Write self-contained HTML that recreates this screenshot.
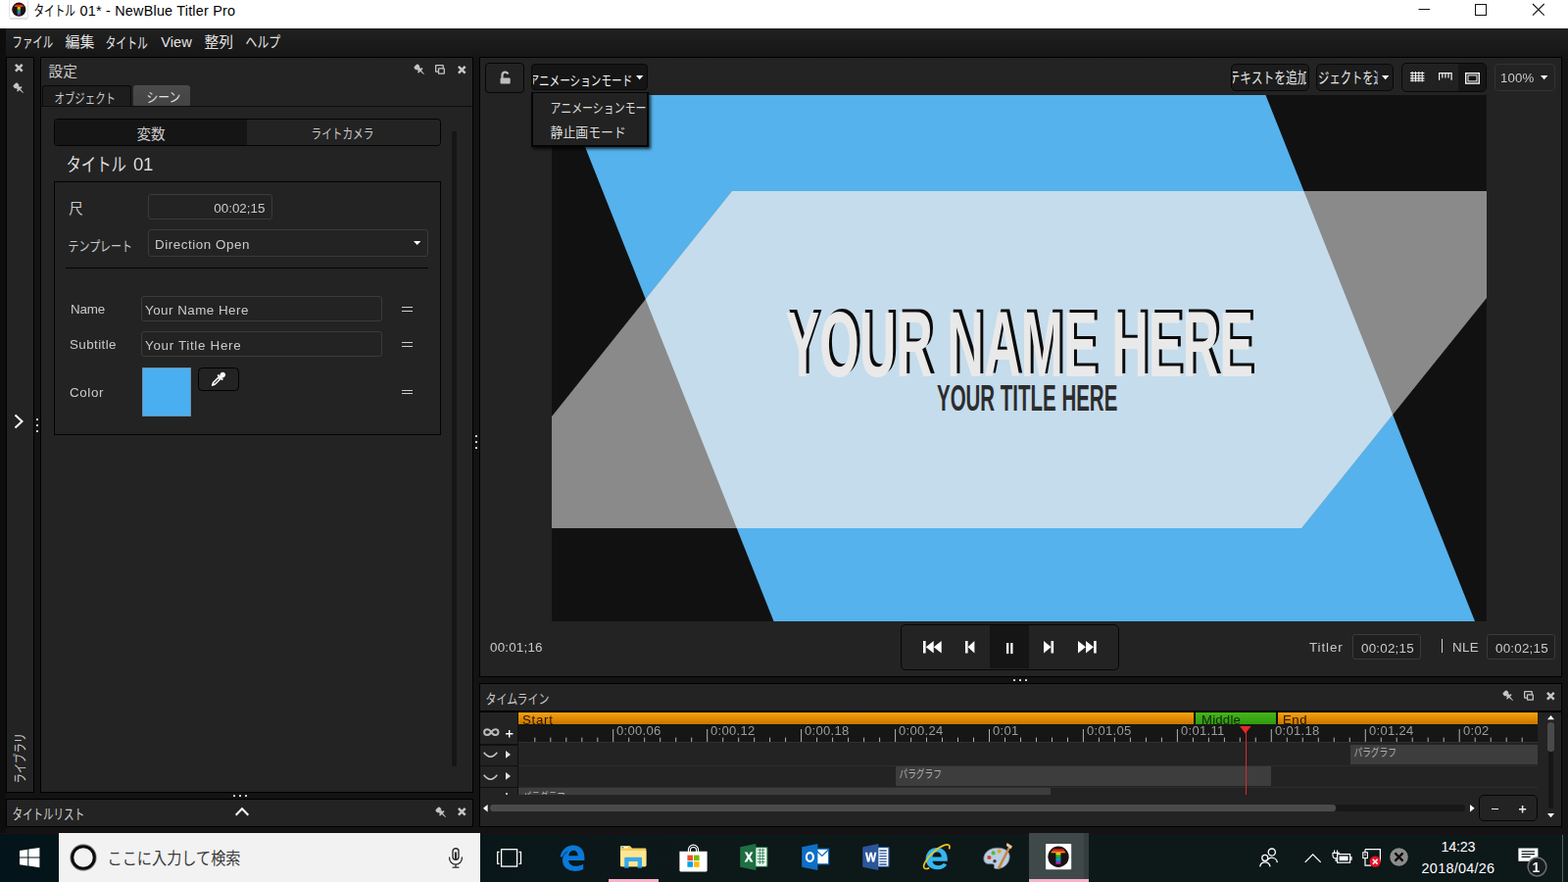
<!DOCTYPE html>
<html lang="ja">
<head>
<meta charset="utf-8">
<title>タイトル 01* - NewBlue Titler Pro</title>
<style>
html,body{margin:0;padding:0;}
body{width:1600px;height:900px;overflow:hidden;background:#131313;position:relative;font-family:"Liberation Sans",sans-serif;}
div{position:absolute;}
svg{display:block;overflow:visible;}
.t{white-space:pre;}
.g{white-space:pre;will-change:transform;}
svg text{font-family:"Liberation Sans","Noto Sans CJK JP",sans-serif;}
</style>
</head>
<body>
<!-- window frame, title bar, menu bar, side strips -->
<div style="left:0px;top:0px;width:1600px;height:29px;background:#fff;"></div>
<svg style="position:absolute;left:9px;top:0px;" width="20" height="20" viewBox="0 0 20 20"><defs><linearGradient id="rb" x1="0" y1="0" x2="0" y2="1"><stop offset="0" stop-color="#e8261c"/><stop offset="0.16" stop-color="#ec3a1a"/><stop offset="0.24" stop-color="#eea00c"/><stop offset="0.36" stop-color="#e2c410"/><stop offset="0.5" stop-color="#42a82c"/><stop offset="0.62" stop-color="#14a04a"/><stop offset="0.74" stop-color="#0c98d8"/><stop offset="0.86" stop-color="#3a5cc8"/><stop offset="1" stop-color="#d81878"/></linearGradient></defs><rect x="0.600" y="-1" width="19" height="19.800" rx="1.600" fill="#fdfdfd" stroke="#e2e2e2" stroke-width="1"/><path d="M1.400 19.200h17.400" stroke="#d0d0d0" stroke-width="0.800"/><circle cx="10.300" cy="9.660" r="7.100" fill="#1a1212"/><path d="M7.100 4.800h6.400l1.700 2.300h-3.300v8.100h-3.200v-8.100h-3.300z" fill="url(#rb)"/></svg>
<svg style="position:absolute;left:34.00px;top:2.70px;" width="43.40" height="14.70" viewBox="0 0 43.40 14.70"><text x="0.5" y="13.04" font-size="14.6" fill="#000" textLength="42.4" lengthAdjust="spacingAndGlyphs">タイトル</text></svg>
<div class="t" style="left:81.6px;top:4.11px;font-size:14.4px;line-height:14.4px;color:#000;white-space:pre;letter-spacing:0.21px;">01* - NewBlue Titler Pro</div>
<svg style="position:absolute;left:1440px;top:0px;" width="160" height="29" viewBox="0 0 160 29"><path d="M7.5 9.5h11.5" stroke="#111" stroke-width="1"/><rect x="65.5" y="4.5" width="11" height="11" fill="none" stroke="#111" stroke-width="1"/><path d="M124 4L135.700 15.700M135.700 4L124 15.700" stroke="#111" stroke-width="1.100" fill="none"/></svg>
<div style="left:0px;top:29px;width:1600px;height:29.6px;background:linear-gradient(#212121,#1b1b1b 50%,#151515);"></div>
<div style="left:0px;top:29px;width:6px;height:821px;background:#0d0d0d;"></div>
<svg style="position:absolute;left:11.70px;top:34.70px;" width="42.60" height="15.70" viewBox="0 0 42.60 15.70"><text x="0.5" y="13.44" font-size="15.3" fill="#e4e4e4" textLength="41.6" lengthAdjust="spacingAndGlyphs">ファイル</text></svg>
<svg style="position:absolute;left:65.50px;top:34.20px;" width="30.80" height="15.90" viewBox="0 0 30.80 15.90"><text x="0.5" y="13.69" font-size="15" fill="#e4e4e4" textLength="29.8" lengthAdjust="spacingAndGlyphs">編集</text></svg>
<svg style="position:absolute;left:107.40px;top:34.70px;" width="44.50" height="15.70" viewBox="0 0 44.50 15.70"><text x="0.5" y="14.0" font-size="15.3" fill="#e4e4e4" textLength="43.5" lengthAdjust="spacingAndGlyphs">タイトル</text></svg>
<div class="t" style="left:164.2px;top:35.64px;font-size:14.6px;line-height:14.6px;color:#e4e4e4;white-space:pre;letter-spacing:0.1px;">View</div>
<svg style="position:absolute;left:207.70px;top:34.20px;" width="30.50" height="15.90" viewBox="0 0 30.50 15.90"><text x="0.5" y="13.65" font-size="15" fill="#e4e4e4" textLength="29.5" lengthAdjust="spacingAndGlyphs">整列</text></svg>
<svg style="position:absolute;left:250.30px;top:34.40px;" width="36.70" height="15.80" viewBox="0 0 36.70 15.80"><text x="0.5" y="14.25" font-size="15.3" fill="#e4e4e4" textLength="35.7" lengthAdjust="spacingAndGlyphs">ヘルプ</text></svg>
<div style="left:7px;top:58.6px;width:27.2px;height:749.4px;background:#232323;outline:1px solid #000;"></div>
<svg style="position:absolute;left:14.7px;top:64.8px;" width="8.6" height="8.6" viewBox="0 0 8.6 8.6"><path d="M0.9 0.9L7.7 7.7M7.7 0.9L0.9 7.7" stroke="#c6c6c6" stroke-width="2.5" fill="none"/></svg>
<svg style="position:absolute;left:14px;top:85.2px;" width="10" height="10" viewBox="0 0 10 10"><g transform="rotate(-45 5 5)" fill="#c6c6c6"><rect x="2.200" y="-0.700" width="5.600" height="4" rx="1.200"/><path d="M3.100 3.200h3.800l-0.300 2.400h-3.200z"/><rect x="1.800" y="5.300" width="6.400" height="1.600" rx="0.500"/><path d="M4.200 6.800h1.600L5.300 11.700h-0.600z"/></g></svg>
<svg style="position:absolute;left:14px;top:422px;" width="11" height="16" viewBox="0 0 11 16"><path d="M1.5 1.5L8.5 8L1.5 14.5" fill="none" stroke="#fff" stroke-width="2"/></svg>
<div style="left:36.9px;top:426.6px;width:2px;height:2px;background:#e4e4e4;border-radius:0.6px;"></div>
<div style="left:484.9px;top:444px;width:2px;height:2px;background:#e4e4e4;border-radius:0.6px;"></div>
<div style="left:36.9px;top:432.7px;width:2px;height:2px;background:#e4e4e4;border-radius:0.6px;"></div>
<div style="left:484.9px;top:450px;width:2px;height:2px;background:#e4e4e4;border-radius:0.6px;"></div>
<div style="left:36.9px;top:438.8px;width:2px;height:2px;background:#e4e4e4;border-radius:0.6px;"></div>
<div style="left:484.9px;top:456px;width:2px;height:2px;background:#e4e4e4;border-radius:0.6px;"></div>
<div style="left:12px;top:749.5px;width:15px;height:52px;"><svg style="position:absolute;left:-1.00px;top:-1.00px;transform-origin:0 0;transform:translate(0px,51px) rotate(-90deg);" width="52.60" height="15.80" viewBox="0 0 52.60 15.80"><text x="0.5" y="13.96" font-size="13.8" fill="#c8c8c8" textLength="51.6" lengthAdjust="spacingAndGlyphs">ライブラリ</text></svg></div>
<div style="left:237.5px;top:811px;width:2px;height:2px;background:#e4e4e4;border-radius:0.6px;"></div>
<div style="left:1034.4px;top:693px;width:2px;height:2px;background:#e4e4e4;border-radius:0.6px;"></div>
<div style="left:243.5px;top:811px;width:2px;height:2px;background:#e4e4e4;border-radius:0.6px;"></div>
<div style="left:1040.4px;top:693px;width:2px;height:2px;background:#e4e4e4;border-radius:0.6px;"></div>
<div style="left:249.5px;top:811px;width:2px;height:2px;background:#e4e4e4;border-radius:0.6px;"></div>
<div style="left:1046.4px;top:693px;width:2px;height:2px;background:#e4e4e4;border-radius:0.6px;"></div>
<div style="left:7px;top:816px;width:475px;height:27px;background:#232323;outline:1px solid #000;"></div>
<svg style="position:absolute;left:12.20px;top:821.50px;" width="74.70" height="15.50" viewBox="0 0 74.70 15.50"><text x="0.5" y="13.62" font-size="14.5" fill="#d0d0d0" textLength="73.7" lengthAdjust="spacingAndGlyphs">タイトルリスト</text></svg>
<svg style="position:absolute;left:239px;top:823px;" width="16" height="10" viewBox="0 0 16 10"><path d="M1.7 8.8L8 2.3L14.3 8.8" fill="none" stroke="#fff" stroke-width="2"/></svg>
<svg style="position:absolute;left:445px;top:823.5px;" width="10" height="10" viewBox="0 0 10 10"><g transform="rotate(-45 5 5)" fill="#c6c6c6"><rect x="2.200" y="-0.700" width="5.600" height="4" rx="1.200"/><path d="M3.100 3.200h3.800l-0.300 2.400h-3.200z"/><rect x="1.800" y="5.300" width="6.400" height="1.600" rx="0.500"/><path d="M4.200 6.800h1.600L5.300 11.700h-0.600z"/></g></svg>
<svg style="position:absolute;left:466.8px;top:823.8px;" width="8.6" height="8.6" viewBox="0 0 8.6 8.6"><path d="M0.9 0.9L7.7 7.7M7.7 0.9L0.9 7.7" stroke="#c6c6c6" stroke-width="2.5" fill="none"/></svg>
<!-- settings panel -->
<div style="left:41.6px;top:58.6px;width:440.4px;height:749.4px;background:#232323;outline:1px solid #000;"></div>
<svg style="position:absolute;left:48.80px;top:64.90px;" width="30.40" height="15.40" viewBox="0 0 30.40 15.40"><text x="0.5" y="13.25" font-size="14.5" fill="#cacaca" textLength="29.4" lengthAdjust="spacingAndGlyphs">設定</text></svg>
<svg style="position:absolute;left:423px;top:65.9px;" width="10" height="10" viewBox="0 0 10 10"><g transform="rotate(-45 5 5)" fill="#c6c6c6"><rect x="2.200" y="-0.700" width="5.600" height="4" rx="1.200"/><path d="M3.100 3.200h3.800l-0.300 2.400h-3.200z"/><rect x="1.800" y="5.300" width="6.400" height="1.600" rx="0.500"/><path d="M4.200 6.800h1.600L5.300 11.700h-0.600z"/></g></svg>
<svg style="position:absolute;left:444.05px;top:66.1px;" width="10" height="10" viewBox="0 0 10 10"><rect x="0.65" y="0.65" width="7.6" height="6.4" rx="0.4" fill="none" stroke="#c6c6c6" stroke-width="1.3"/><rect x="3.5" y="3.85" width="5.8" height="5.2" rx="0.4" fill="#232323" stroke="#c6c6c6" stroke-width="1.3"/></svg>
<svg style="position:absolute;left:466.7px;top:66.8px;" width="8.6" height="8.6" viewBox="0 0 8.6 8.6"><path d="M0.9 0.9L7.7 7.7M7.7 0.9L0.9 7.7" stroke="#c6c6c6" stroke-width="2.5" fill="none"/></svg>
<div style="left:43px;top:87.4px;width:90.6px;height:20.6px;background:#1d1d1d;border:1.2px solid #080808;border-bottom:none;border-radius:3px 3px 0 0;box-sizing:border-box;"></div>
<svg style="position:absolute;left:54.70px;top:90.70px;" width="63.50" height="15.60" viewBox="0 0 63.50 15.60"><text x="0.5" y="14.06" font-size="14" fill="#cacaca" textLength="62.5" lengthAdjust="spacingAndGlyphs">オブジェクト</text></svg>
<div style="left:136px;top:86.6px;width:58.4px;height:21.4px;background:linear-gradient(#4b4b4b,#434343);border-radius:3px 3px 0 0;"></div>
<svg style="position:absolute;left:148.70px;top:90.70px;" width="35.70" height="14.50" viewBox="0 0 35.70 14.50"><text x="0.5" y="13.48" font-size="14" fill="#e0e0e0" textLength="34.7" lengthAdjust="spacingAndGlyphs">シーン</text></svg>
<div style="left:41.6px;top:107.8px;width:440.4px;height:1.5px;background:#0e0e0e;"></div>
<div style="left:54.5px;top:121.4px;width:395.2px;height:27.2px;background:#232323;border:1.2px solid #030303;border-radius:3.5px;box-sizing:border-box;overflow:hidden;"><div style="left:0;top:0;width:196.5px;height:26px;background:#151515;"></div></div>
<svg style="position:absolute;left:138.90px;top:129.20px;" width="30.20" height="15.00" viewBox="0 0 30.20 15.00"><text x="0.5" y="12.81" font-size="14.5" fill="#cacaca" textLength="29.2" lengthAdjust="spacingAndGlyphs">変数</text></svg>
<svg style="position:absolute;left:316.60px;top:128.40px;" width="64.90" height="15.10" viewBox="0 0 64.90 15.10"><text x="0.5" y="13.36" font-size="14" fill="#cacaca" textLength="63.9" lengthAdjust="spacingAndGlyphs">ライトカメラ</text></svg>
<div style="left:461px;top:134px;width:5px;height:648px;background:#161616;"></div>
<svg style="position:absolute;left:66.60px;top:157.60px;" width="62.40" height="18.70" viewBox="0 0 62.40 18.70"><text x="0.5" y="16.76" font-size="19" fill="#dedede" textLength="61.4" lengthAdjust="spacingAndGlyphs">タイトル</text></svg>
<div class="g" style="left:136.2px;top:158.86px;font-size:18.6px;line-height:18.6px;color:#dedede;white-space:pre;letter-spacing:-0.3px;">01</div>
<div style="left:54.5px;top:185.2px;width:395.2px;height:258.4px;border:1.2px solid #030303;box-sizing:border-box;"></div>
<svg style="position:absolute;left:70.20px;top:204.90px;" width="15.10" height="15.10" viewBox="0 0 15.10 15.10"><text x="0.3" y="12.93" font-size="14.5" fill="#cacaca" textLength="14.5" lengthAdjust="spacingAndGlyphs">尺</text></svg>
<div style="left:151px;top:198px;width:126.7px;height:25.8px;border:1px solid #3b3b3b;border-radius:3px;box-sizing:border-box;"></div>
<div class="g" style="left:151px;top:205.66px;font-size:13.4px;line-height:13.4px;color:#cacaca;white-space:pre;width:119.4px;text-align:right;">00:02;15</div>
<svg style="position:absolute;left:68.90px;top:241.50px;" width="66.60" height="15.10" viewBox="0 0 66.60 15.10"><text x="0.5" y="13.52" font-size="14" fill="#cacaca" textLength="65.6" lengthAdjust="spacingAndGlyphs">テンプレート</text></svg>
<div style="left:151px;top:234px;width:286px;height:28px;border:1px solid #3b3b3b;border-radius:3px;box-sizing:border-box;"></div>
<div class="g" style="left:158.4px;top:242.66px;font-size:13.4px;line-height:13.4px;color:#cacaca;white-space:pre;letter-spacing:0.55px;">Direction Open</div>
<svg style="position:absolute;left:421.8px;top:246.2px;" width="7.4" height="4" viewBox="0 0 7.4 4"><path d="M0 0h7.4L3.7 4z" fill="#fff"/></svg>
<div style="left:67px;top:273px;width:370px;height:1.4px;background:#040404;"></div>
<div class="g" style="left:71.8px;top:308.66px;font-size:13.4px;line-height:13.4px;color:#cacaca;white-space:pre;letter-spacing:-0.2px;">Name</div>
<div style="left:144px;top:302.2px;width:246px;height:25.6px;border:1px solid #3b3b3b;border-radius:3px;box-sizing:border-box;"></div>
<div class="g" style="left:148px;top:309.66px;font-size:13.4px;line-height:13.4px;color:#cacaca;white-space:pre;letter-spacing:0.47px;">Your Name Here</div>
<div style="left:410.4px;top:313px;width:11px;height:1.3px;background:#d0d0d0;"></div><div style="left:410.4px;top:316.7px;width:11px;height:1.3px;background:#d0d0d0;"></div>
<div class="g" style="left:71.2px;top:344.86px;font-size:13.4px;line-height:13.4px;color:#cacaca;white-space:pre;letter-spacing:0.4px;">Subtitle</div>
<div style="left:144px;top:338px;width:246px;height:25.6px;border:1px solid #3b3b3b;border-radius:3px;box-sizing:border-box;"></div>
<div class="g" style="left:148px;top:345.66px;font-size:13.4px;line-height:13.4px;color:#cacaca;white-space:pre;letter-spacing:0.68px;">Your Title Here</div>
<div style="left:410.4px;top:349px;width:11px;height:1.3px;background:#d0d0d0;"></div><div style="left:410.4px;top:352.7px;width:11px;height:1.3px;background:#d0d0d0;"></div>
<div class="g" style="left:71.2px;top:393.86px;font-size:13.4px;line-height:13.4px;color:#cacaca;white-space:pre;letter-spacing:0.6px;">Color</div>
<div style="left:145.3px;top:375.2px;width:49.6px;height:49.8px;background:#4aaff0;border:1px solid #6a90ac;box-sizing:border-box;"></div>
<div style="left:202.2px;top:375.2px;width:41.4px;height:23.4px;background:#232323;border:1.4px solid #000;border-radius:4.5px;box-sizing:border-box;"></div>
<svg style="position:absolute;left:215.6px;top:379.6px;" width="13.8" height="13.8" viewBox="0 0 13.8 13.8"><g transform="rotate(45 6.9 6.9)" fill="#fff" fill-rule="evenodd"><circle cx="6.900" cy="0.700" r="2.700"/><rect x="5.600" y="2.400" width="2.600" height="1.400"/><rect x="3.300" y="3.400" width="7.200" height="1.800" rx="0.500"/><path d="M4.900 5.100h4v8.200l-1.400 3.100h-1.200l-1.400-3.100zM6.400 6.600v6.600h1v-6.600z"/></g></svg>
<div style="left:410.4px;top:397.5px;width:11px;height:1.3px;background:#d0d0d0;"></div><div style="left:410.4px;top:401.2px;width:11px;height:1.3px;background:#d0d0d0;"></div>
<!-- main preview panel -->
<div style="left:490px;top:58.6px;width:1103px;height:631.4px;background:#232323;outline:1px solid #000;"></div>
<svg style="position:absolute;left:563px;top:96.8px;" width="954" height="537" viewBox="0 0 954 537"><defs><clipPath id="cb"><polygon points="13,0 728.5,0 942,537 226.5,537"/></clipPath></defs><rect width="954" height="537" fill="#111"/><polygon points="13,0 728.5,0 942,537 226.5,537" fill="#55b2ec"/><polygon points="184,98 954,98 954,207 765,442 0,442 0,328" fill="#8a8a8a"/><polygon points="184,98 954,98 954,207 765,442 0,442 0,328" fill="#c5dcec" clip-path="url(#cb)"/></svg>
<svg style="position:absolute;left:563px;top:96.8px" width="954" height="537" viewBox="0 0 954 537"><text x="241.4" y="284.4" font-size="94" font-weight="bold" fill="#0b0b0b" textLength="477.5" lengthAdjust="spacingAndGlyphs">YOUR NAME HERE</text><text x="238.4" y="287.4" font-size="94" font-weight="bold" fill="#e9e9e9" textLength="477.5" lengthAdjust="spacingAndGlyphs">YOUR NAME HERE</text><text x="393" y="322" font-size="36.2" font-weight="bold" fill="#2c2c2c" textLength="184.3" lengthAdjust="spacingAndGlyphs">YOUR TITLE HERE</text></svg>
<div style="left:495.1px;top:64px;width:39.8px;height:30.9px;background:#232323;border:1px solid #050505;border-radius:4px;box-sizing:border-box;overflow:hidden;"></div>
<svg style="position:absolute;left:509.5px;top:71.5px;" width="11.5" height="14" viewBox="0 0 11.5 14"><path d="M2.500 8.200V4.700a3.100 3.100 0 0 1 5.950-1.250" fill="none" stroke="#bebebe" stroke-width="2.200"/><rect x="0.500" y="7.600" width="10.200" height="6" rx="1.100" fill="#bebebe"/></svg>
<div style="left:542.4px;top:65.3px;width:118.8px;height:26.9px;background:#151515;border:1px solid #080808;border-radius:4px;box-sizing:border-box;overflow:hidden;"></div>
<div style="left:543.6px;top:66.3px;width:103px;height:24.9px;overflow:hidden;"><svg style="position:absolute;left:-4.80px;top:6.40px;" width="106.80" height="15.50" viewBox="0 0 106.80 15.50"><text x="0.5" y="14.02" font-size="14" fill="#f4f4f4" textLength="105.8" lengthAdjust="spacingAndGlyphs">アニメーションモード</text></svg></div>
<svg style="position:absolute;left:648.8px;top:76.9px;" width="7.4" height="4.2" viewBox="0 0 7.4 4.2"><path d="M0 0h7.4L3.7 4.2z" fill="#fff"/></svg>
<div style="left:542.4px;top:93.6px;width:119.3px;height:56.9px;background:#222;border:2.2px solid #050505;border-top-width:1.8px;box-sizing:border-box;box-shadow:2px 2px 3px rgba(0,0,0,0.75);overflow:hidden;"><svg style="position:absolute;left:16.90px;top:7.40px;" width="110.00" height="14.10" viewBox="0 0 110.00 14.10"><text x="0.5" y="12.67" font-size="13.5" fill="#dcdcdc" textLength="109" lengthAdjust="spacingAndGlyphs">アニメーションモード</text></svg><svg style="position:absolute;left:16.90px;top:32.70px;" width="78.30" height="15.20" viewBox="0 0 78.30 15.20"><text x="0.5" y="13.18" font-size="14" fill="#dcdcdc" textLength="77.3" lengthAdjust="spacingAndGlyphs">静止画モード</text></svg></div>
<div style="left:1256.2px;top:65.4px;width:79.4px;height:27.2px;background:#1c1c1c;border:1px solid #080808;border-radius:5px;box-sizing:border-box;overflow:hidden;"></div>
<div style="left:1257.6px;top:66.4px;width:75.8px;height:25.2px;overflow:hidden;"><svg style="position:absolute;left:-4.70px;top:3.80px;" width="83.00" height="17.20" viewBox="0 0 83.00 17.20"><text x="0.5" y="15.03" font-size="15.5" fill="#e6e6e6" textLength="82" lengthAdjust="spacingAndGlyphs">テキストを追加</text></svg></div>
<div style="left:1343.4px;top:65.4px;width:78.8px;height:27.2px;background:#1c1c1c;border:1px solid #080808;border-radius:5px;box-sizing:border-box;overflow:hidden;"></div>
<div style="left:1344.6px;top:66.4px;width:61.2px;height:25.2px;overflow:hidden;"><svg style="position:absolute;left:-22.50px;top:3.80px;" width="102.70" height="17.20" viewBox="0 0 102.70 17.20"><text x="0.5" y="15.06" font-size="15.5" fill="#e6e6e6" textLength="101.7" lengthAdjust="spacingAndGlyphs">オブジェクトを追加</text></svg></div>
<svg style="position:absolute;left:1410.3px;top:77.1px;" width="7.4" height="4.2" viewBox="0 0 7.4 4.2"><path d="M0 0h7.4L3.7 4.2z" fill="#fff"/></svg>
<div style="left:1430.1px;top:64.3px;width:87.4px;height:30.2px;background:#212121;border:1px solid #080808;border-radius:5px;box-sizing:border-box;overflow:hidden;"><div style="left:57.2px;top:0;width:30px;height:29px;background:#161616;"></div></div>
<svg style="position:absolute;left:1438.8px;top:73.3px;" width="14.4" height="10.6" viewBox="0 0 14.4 10.6"><path d="M0 1.6h14.4M0 4.2h14.4M0 6.9h14.4M0 9.2h14.4M2.1 0v10.600M5.500 0v10.600M8.800 0v10.600M12.200 0v10.600" stroke="#f4f4f4" stroke-width="1.050" fill="none"/></svg>
<svg style="position:absolute;left:1467.5px;top:74.4px;" width="13.8" height="7.8" viewBox="0 0 13.8 7.8"><path d="M0.600 7.800V0.600h12.500v7.200M3.800 0.600v5M6.900 0.600v5M10 0.600v5" stroke="#f4f4f4" stroke-width="1.200" fill="none"/></svg>
<svg style="position:absolute;left:1494.6px;top:73.6px;" width="15" height="11.8" viewBox="0 0 15 11.8"><rect x="0.700" y="0.700" width="13.600" height="10.400" fill="none" stroke="#f4f4f4" stroke-width="1.400"/><rect x="3" y="2.900" width="9" height="6" fill="none" stroke="#f4f4f4" stroke-width="1"/></svg>
<div style="left:1525px;top:65.2px;width:61.8px;height:27.6px;background:#232323;border:1px solid #333;border-radius:4px;box-sizing:border-box;overflow:hidden;"></div>
<div class="g" style="left:1531.2px;top:73.23px;font-size:13.2px;line-height:13.2px;color:#cacaca;white-space:pre;letter-spacing:0.2px;">100%</div>
<svg style="position:absolute;left:1571.8px;top:76.9px;" width="7.4" height="4.2" viewBox="0 0 7.4 4.2"><path d="M0 0h7.4L3.7 4.2z" fill="#fff"/></svg>
<div class="g" style="left:500.4px;top:654.26px;font-size:13.4px;line-height:13.4px;color:#cacaca;white-space:pre;letter-spacing:0.2px;">00:01;16</div>
<div style="left:918.6px;top:636.6px;width:223.2px;height:47px;background:#232323;border:1px solid #060606;border-radius:5px;box-sizing:border-box;overflow:hidden;"><div style="left:90.3px;top:0.5px;width:39.9px;height:43.8px;background:#151515;"></div></div>
<svg style="position:absolute;left:941.6px;top:654.3px;" width="18.8" height="12.5" viewBox="0 0 18.8 12.5"><rect x="0" y="0" width="2.600" height="12.500" fill="#fff"/><path d="M10.700 0v12.500L2.800 6.250zM18.700 0v12.500L10.800 6.250z" fill="#fff"/></svg>
<svg style="position:absolute;left:984.7px;top:654.3px;" width="9.4" height="12.5" viewBox="0 0 9.4 12.5"><rect x="0" y="0" width="2.600" height="12.500" fill="#fff"/><path d="M9.400 0v12.500L2.600 6.250z" fill="#fff"/></svg>
<svg style="position:absolute;left:1026.8px;top:655.7px;" width="6.6" height="11.1" viewBox="0 0 6.6 11.1"><rect x="0" y="0" width="2.300" height="11.100" fill="#fff"/><rect x="4.200" y="0" width="2.300" height="11.100" fill="#fff"/></svg>
<svg style="position:absolute;left:1064.9px;top:654.3px;" width="10.1" height="12.5" viewBox="0 0 10.1 12.5"><rect x="7.500" y="0" width="2.600" height="12.500" fill="#fff"/><path d="M0 0v12.500L7.500 6.250z" fill="#fff"/></svg>
<svg style="position:absolute;left:1100.4px;top:654.3px;" width="18.8" height="12.5" viewBox="0 0 18.8 12.5"><rect x="16.100" y="0" width="2.600" height="12.500" fill="#fff"/><path d="M0 0v12.500L7.900 6.250zM8 0v12.500L15.900 6.250z" fill="#fff"/></svg>
<div class="g" style="left:1335.6px;top:654.26px;font-size:13.4px;line-height:13.4px;color:#cacaca;white-space:pre;letter-spacing:0.9px;">Titler</div>
<div style="left:1380.2px;top:647.2px;width:69.4px;height:25.4px;border:1px solid #3b3b3b;border-radius:3px;box-sizing:border-box;background:#1f1f1f;"></div>
<div class="g" style="left:1389.2px;top:654.66px;font-size:13.4px;line-height:13.4px;color:#cacaca;white-space:pre;letter-spacing:0.22px;">00:02;15</div>
<div style="left:1470.8px;top:652.2px;width:1.2px;height:14px;background:#d0d0d0;"></div>
<div class="g" style="left:1482px;top:654.26px;font-size:13.4px;line-height:13.4px;color:#cacaca;white-space:pre;letter-spacing:0.3px;">NLE</div>
<div style="left:1517px;top:647.2px;width:69.8px;height:25.4px;border:1px solid #3b3b3b;border-radius:3px;box-sizing:border-box;background:#1f1f1f;"></div>
<div class="g" style="left:1526.2px;top:654.66px;font-size:13.4px;line-height:13.4px;color:#cacaca;white-space:pre;letter-spacing:0.22px;">00:02;15</div>
<!-- timeline panel -->
<div style="left:490px;top:698px;width:1103px;height:145px;background:#232323;outline:1px solid #000;"></div>
<svg style="position:absolute;left:495.40px;top:704.00px;" width="66.00" height="15.30" viewBox="0 0 66.00 15.30"><text x="0.5" y="13.54" font-size="14" fill="#cacaca" textLength="65" lengthAdjust="spacingAndGlyphs">タイムライン</text></svg>
<svg style="position:absolute;left:1534.4px;top:705.3px;" width="10" height="10" viewBox="0 0 10 10"><g transform="rotate(-45 5 5)" fill="#c6c6c6"><rect x="2.200" y="-0.700" width="5.600" height="4" rx="1.200"/><path d="M3.100 3.200h3.800l-0.300 2.400h-3.200z"/><rect x="1.800" y="5.300" width="6.400" height="1.600" rx="0.500"/><path d="M4.200 6.800h1.600L5.300 11.700h-0.600z"/></g></svg>
<svg style="position:absolute;left:1554.6px;top:705.2px;" width="10" height="10" viewBox="0 0 10 10"><rect x="0.65" y="0.65" width="7.6" height="6.4" rx="0.4" fill="none" stroke="#c6c6c6" stroke-width="1.3"/><rect x="3.5" y="3.85" width="5.8" height="5.2" rx="0.4" fill="#232323" stroke="#c6c6c6" stroke-width="1.3"/></svg>
<svg style="position:absolute;left:1577.8px;top:705.8px;" width="8.6" height="8.6" viewBox="0 0 8.6 8.6"><path d="M0.9 0.9L7.7 7.7M7.7 0.9L0.9 7.7" stroke="#c6c6c6" stroke-width="2.5" fill="none"/></svg>
<div style="left:490px;top:725px;width:1103px;height:1.6px;background:#000;"></div>
<div style="left:528.8px;top:726.6px;width:1040.4px;height:12.8px;background:linear-gradient(#f7a312,#e58d06 45%,#c77700);"></div>
<div style="left:1217.8px;top:726.6px;width:86.2px;height:12.8px;background:#0c0c0c;"></div>
<div style="left:1219.6px;top:726.6px;width:82.6px;height:12.8px;background:linear-gradient(#45b51a,#2f9a10);"></div>
<div class="g" style="left:533.2px;top:727.73px;font-size:13.2px;line-height:13.2px;color:#231806;white-space:pre;letter-spacing:0.75px;">Start</div>
<div class="g" style="left:1226.2px;top:727.73px;font-size:13.2px;line-height:13.2px;color:#17240c;white-space:pre;letter-spacing:0.2px;">Middle</div>
<div class="g" style="left:1309.4px;top:727.73px;font-size:13.2px;line-height:13.2px;color:#231806;white-space:pre;letter-spacing:0.5px;">End</div>
<div style="left:528.8px;top:739.4px;width:1040.4px;height:18.2px;background:#161616;border-bottom:1px solid #303030;box-sizing:border-box;"></div>
<svg style="position:absolute;left:528.8px;top:739.4px;" width="1040.4" height="18" viewBox="0 0 1040.4 18"><path d="M16.8 13.6V18M32.8 13.6V18M48.8 13.6V18M64.8 13.6V18M80.8 13.6V18M96.7 5V18M112.7 13.6V18M128.7 13.6V18M144.7 13.6V18M160.7 13.6V18M176.7 13.6V18M192.7 5V18M208.7 13.6V18M224.7 13.6V18M240.7 13.6V18M256.6 13.6V18M272.6 13.6V18M288.6 5V18M304.6 13.6V18M320.6 13.6V18M336.6 13.6V18M352.6 13.6V18M368.6 13.6V18M384.6 5V18M400.6 13.6V18M416.5 13.6V18M432.5 13.6V18M448.5 13.6V18M464.5 13.6V18M480.5 5V18M496.5 13.6V18M512.5 13.6V18M528.5 13.6V18M544.5 13.6V18M560.5 13.6V18M576.4 5V18M592.4 13.6V18M608.4 13.6V18M624.4 13.6V18M640.4 13.6V18M656.4 13.6V18M672.4 5V18M688.4 13.6V18M704.4 13.6V18M720.4 13.6V18M736.3 13.6V18M752.3 13.6V18M768.3 5V18M784.3 13.6V18M800.3 13.6V18M816.3 13.6V18M832.3 13.6V18M848.3 13.6V18M864.3 5V18M880.3 13.6V18M896.2 13.6V18M912.2 13.6V18M928.2 13.6V18M944.2 13.6V18M960.2 5V18M976.2 13.6V18M992.2 13.6V18M1008.2 13.6V18M1024.2 13.6V18" stroke="#b4b4b4" stroke-width="1" fill="none"/></svg>
<div class="g" style="left:629.14px;top:738.90px;font-size:13px;line-height:13px;color:#9c9c9c;white-space:pre;letter-spacing:0.32px;">0:00.06</div>
<div class="g" style="left:725.08px;top:738.90px;font-size:13px;line-height:13px;color:#9c9c9c;white-space:pre;letter-spacing:0.32px;">0:00.12</div>
<div class="g" style="left:821.02px;top:738.90px;font-size:13px;line-height:13px;color:#9c9c9c;white-space:pre;letter-spacing:0.32px;">0:00.18</div>
<div class="g" style="left:916.96px;top:738.90px;font-size:13px;line-height:13px;color:#9c9c9c;white-space:pre;letter-spacing:0.32px;">0:00.24</div>
<div class="g" style="left:1012.9px;top:738.90px;font-size:13px;line-height:13px;color:#9c9c9c;white-space:pre;letter-spacing:0.32px;">0:01</div>
<div class="g" style="left:1108.84px;top:738.90px;font-size:13px;line-height:13px;color:#9c9c9c;white-space:pre;letter-spacing:0.32px;">0:01.05</div>
<div class="g" style="left:1204.78px;top:738.90px;font-size:13px;line-height:13px;color:#9c9c9c;white-space:pre;letter-spacing:0.32px;">0:01.11</div>
<div class="g" style="left:1300.72px;top:738.90px;font-size:13px;line-height:13px;color:#9c9c9c;white-space:pre;letter-spacing:0.32px;">0:01.18</div>
<div class="g" style="left:1396.66px;top:738.90px;font-size:13px;line-height:13px;color:#9c9c9c;white-space:pre;letter-spacing:0.32px;">0:01.24</div>
<div class="g" style="left:1492.6px;top:738.90px;font-size:13px;line-height:13px;color:#9c9c9c;white-space:pre;letter-spacing:0.32px;">0:02</div>
<div style="left:490px;top:726.6px;width:38.2px;height:84.2px;background:#232323;border-right:1.4px solid #101010;"></div>
<div style="left:490px;top:759.4px;width:38.2px;height:1.4px;background:#101010;"></div>
<div style="left:490px;top:780.6px;width:38.2px;height:1.4px;background:#101010;"></div>
<div style="left:490px;top:802.8px;width:38.2px;height:1.4px;background:#101010;"></div>
<div style="left:528.8px;top:781px;width:1040.4px;height:1px;background:#2d2d2d;"></div>
<div style="left:528.8px;top:803px;width:1040.4px;height:1px;background:#2d2d2d;"></div>
<svg style="position:absolute;left:492.6px;top:743.4px;" width="16.6" height="8.2" viewBox="0 0 16.6 8.2"><path d="M8.3 4.1C6.6 1.4 5.2 1.2 4 1.2a2.9 2.9 0 0 0 0 5.8C5.2 7 6.6 6.8 8.3 4.1S11.4 1.2 12.6 1.2a2.9 2.9 0 0 1 0 5.8C11.4 7 10 6.8 8.3 4.1z" fill="none" stroke="#b8b8b8" stroke-width="2"/></svg>
<svg style="position:absolute;left:516px;top:745px;" width="7.4" height="7.4" viewBox="0 0 7.4 7.4"><path d="M3.7 0v7.4M0 3.7h7.4" stroke="#fff" stroke-width="1.4" fill="none"/></svg>
<svg style="position:absolute;left:492.6px;top:767.4px;" width="15" height="6.4" viewBox="0 0 15 6.4"><path d="M0.7 0.8Q7.5 9.6 14.3 0.8" fill="none" stroke="#c8c8c8" stroke-width="1.5"/></svg>
<svg style="position:absolute;left:515.6px;top:765.8px;" width="5" height="7.8" viewBox="0 0 5 7.8"><path d="M0 0L5 3.9L0 7.8z" fill="#e0e0e0"/></svg>
<svg style="position:absolute;left:492.6px;top:789.6px;" width="15" height="6.4" viewBox="0 0 15 6.4"><path d="M0.7 0.8Q7.5 9.6 14.3 0.8" fill="none" stroke="#c8c8c8" stroke-width="1.5"/></svg>
<svg style="position:absolute;left:515.6px;top:788px;" width="5" height="7.8" viewBox="0 0 5 7.8"><path d="M0 0L5 3.9L0 7.8z" fill="#e0e0e0"/></svg>
<div style="left:516.4px;top:809.4px;width:1.4px;height:1.2px;background:#bbb;"></div>
<div style="left:1377.8px;top:760px;width:191.4px;height:20.2px;background:#3d3d3d;"></div>
<svg style="position:absolute;left:1381.40px;top:760.00px;" width="44.40" height="13.30" viewBox="0 0 44.40 13.30"><text x="0.5" y="11.71" font-size="11.5" fill="#b0b0b0" textLength="43.4" lengthAdjust="spacingAndGlyphs">パラグラフ</text></svg>
<div style="left:913.6px;top:782.2px;width:383.8px;height:20px;background:#3d3d3d;"></div>
<svg style="position:absolute;left:917.00px;top:782.20px;" width="44.40" height="13.30" viewBox="0 0 44.40 13.30"><text x="0.5" y="11.71" font-size="11.5" fill="#b0b0b0" textLength="43.4" lengthAdjust="spacingAndGlyphs">パラグラフ</text></svg>
<div style="left:528.8px;top:804.2px;width:543.4px;height:6.4px;background:#3d3d3d;overflow:hidden;"><svg style="position:absolute;left:4.60px;top:0.40px;" width="44.40" height="13.30" viewBox="0 0 44.40 13.30"><text x="0.5" y="11.71" font-size="11.5" fill="#b0b0b0" textLength="43.4" lengthAdjust="spacingAndGlyphs">パラグラフ</text></svg></div>
<div style="left:1270.5px;top:741px;width:1.3px;height:70px;background:#e02424;"></div>
<svg style="position:absolute;left:1265.4px;top:740.6px;" width="11.6" height="7.4" viewBox="0 0 11.6 7.4"><path d="M0 0h11.6L5.8 7.4z" fill="#e62828"/></svg>
<div style="left:490px;top:810.8px;width:1090px;height:32.2px;background:#232323;"></div>
<svg style="position:absolute;left:492.6px;top:820.8px;" width="4.6" height="7.6" viewBox="0 0 4.6 7.6"><path d="M4.6 0v7.6L0 3.8z" fill="#fff"/></svg>
<div style="left:500.4px;top:821.4px;width:995px;height:6.4px;background:#181818;border-radius:3px;"></div>
<div style="left:500.4px;top:821.4px;width:862.4px;height:6.4px;background:#4b4b4b;border-radius:3px;"></div>
<svg style="position:absolute;left:1500.2px;top:820.8px;" width="4.6" height="7.6" viewBox="0 0 4.6 7.6"><path d="M0 0v7.6L4.6 3.8z" fill="#fff"/></svg>
<div style="left:1509px;top:811.4px;width:59.6px;height:27px;background:#232323;border:1.2px solid #050505;border-radius:5px;box-sizing:border-box;"></div>
<div style="left:1522.1px;top:824.7px;width:6.9px;height:1.7px;background:#ececec;"></div>
<svg style="position:absolute;left:1550px;top:822.1px;" width="7.2" height="7.4" viewBox="0 0 7.2 7.4"><path d="M3.6 0v7.4M0 3.7h7.2" stroke="#ececec" stroke-width="1.5" fill="none"/></svg>
<svg style="position:absolute;left:1579.2px;top:729.8px;" width="7" height="4.2" viewBox="0 0 7 4.2"><path d="M0 4.2h7L3.5 0z" fill="#fff"/></svg>
<div style="left:1580.3px;top:737.6px;width:4.8px;height:87.6px;background:#161616;border-radius:2.4px;"></div>
<div style="left:1579.4px;top:737.3px;width:6.6px;height:30.2px;background:#4a4a4a;border-radius:3px;"></div>
<svg style="position:absolute;left:1579.2px;top:829.8px;" width="7" height="4.2" viewBox="0 0 7 4.2"><path d="M0 0h7L3.5 4.2z" fill="#fff"/></svg>
<!-- windows taskbar -->
<div style="left:0px;top:850px;width:1600px;height:50px;background:linear-gradient(90deg,#03151a 0,#07161a 20%,#0d1819 45%,#0d1819 100%);border-top:1px solid #210d13;box-sizing:border-box;"></div>
<svg style="position:absolute;left:19.8px;top:865px;" width="20.4" height="20.2" viewBox="0 0 20.4 20.2"><path fill="#fff" d="M0 2.9L8.3 1.75V9.6H0zM9.3 1.6L20.4 0V9.6H9.3zM0 10.6H8.3V18.4L0 17.25zM9.3 10.6H20.4V20.2L9.3 18.6z"/></svg>
<div style="left:60px;top:850px;width:429.8px;height:50px;background:#f2f2f2;"></div>
<svg style="position:absolute;left:70px;top:860px;" width="30" height="30" viewBox="0 0 30 30"><circle cx="15" cy="15" r="13.1" fill="none" stroke="#8a8a8a" stroke-width="1.1"/><circle cx="15" cy="15" r="11.3" fill="none" stroke="#0a0a0a" stroke-width="3.1"/></svg>
<svg style="position:absolute;left:109.20px;top:866.20px;" width="137.00" height="18.67" viewBox="0 0 137.00 18.67"><text x="0.5" y="16.14" font-size="17" fill="#3a3a3a" textLength="136" lengthAdjust="spacingAndGlyphs">ここに入力して検索</text></svg>
<svg style="position:absolute;left:457px;top:864.6px;" width="16" height="21" viewBox="0 0 16 21"><rect x="5" y="0.7" width="6" height="11.6" rx="3" fill="none" stroke="#2a2a2a" stroke-width="1.4"/><path d="M8 4.5v7.5" stroke="#2a2a2a" stroke-width="2.2"/><path d="M1.6 9.6v1.2a6.4 6.4 0 0 0 12.8 0V9.6M8 17.2v3M4.6 20.2h6.8" fill="none" stroke="#2a2a2a" stroke-width="1.3"/></svg>
<svg style="position:absolute;left:507.4px;top:865.6px;" width="25.2" height="18.8" viewBox="0 0 25.2 18.8"><rect x="4.6" y="0.7" width="16" height="17.4" fill="none" stroke="#fff" stroke-width="1.3"/><path d="M2.6 3.4H0.7V15.4H2.6M22.6 3.4H24.5V15.4H22.6" fill="none" stroke="#fff" stroke-width="1.3"/></svg>
<svg style="position:absolute;left:571px;top:861.6px;" width="26" height="27" viewBox="0 0 26 27"><path fill="#0a79d8" d="M0.8 12.6C1.6 5.4 7 0.4 13.8 0.4c7.2 0 11.6 5.2 11.6 12.4v3.2H9.2c0.3 3.6 3.2 5.8 7.4 5.8c2.8 0 5.2-0.7 7.6-2.1v5.3c-2.5 1.3-5.4 1.9-8.6 1.9C8 26.900 3 22.6 3 16.1c0-4.4 2.400-7.800 6-9.600C6.600 7 4.400 8.600 2.800 12.600zM9.300 11.200h9.500c-0.100-3.400-1.900-5.400-4.700-5.400c-2.700 0-4.500 2.100-4.800 5.400z"/></svg>
<svg style="position:absolute;left:632px;top:862.4px;" width="28" height="24" viewBox="0 0 28 24"><path d="M1 2.200c0-0.800 0.500-1.200 1.200-1.200h8.400l2.600 2.400h13c0.800 0 1.200 0.500 1.200 1.200v16.400c0 0.700-0.500 1.200-1.200 1.200h-24c-0.700 0-1.200-0.500-1.200-1.200z" fill="#f3cd5c"/><path d="M1 6h26.400v15c0 0.700-0.500 1.200-1.200 1.200h-24c-0.700 0-1.200-0.500-1.200-1.200z" fill="#fde693"/><rect x="2.400" y="2" width="6.400" height="1.400" fill="#fff"/><rect x="2.400" y="2" width="2" height="1.400" fill="#3a9be0"/><path d="M5.200 23.600v-9.600c0-0.700 0.500-1.200 1.200-1.200h15.400c0.700 0 1.200 0.500 1.200 1.200v9.600h-4.300v-6.600h-9.200v6.600z" fill="#38a9ea"/><path d="M5.200 23.600v-1.400h4.300v1.400zM18.700 23.600v-1.400h4.300v1.400z" fill="#2b8fd2"/></svg>
<div style="left:621.2px;top:896.6px;width:50.8px;height:3.4px;background:#f6b3ca;"></div>
<svg style="position:absolute;left:693px;top:860.6px;" width="29" height="28.6" viewBox="0 0 29 28.6"><path d="M9.400 8.400V6.200a5.100 5.100 0 0 1 10.200 0v2.200M11.400 8.400V6.600a3.100 3.100 0 0 1 6.200 0v1.800" fill="none" stroke="#fff" stroke-width="1.100"/><path d="M0.400 7.800h28.200v19.400c0 0.700-0.500 1.200-1.200 1.200h-25.800c-0.700 0-1.200-0.500-1.200-1.200z" fill="#fff"/><rect x="8.400" y="11.600" width="5.600" height="5.600" fill="#f25022"/><rect x="15" y="11.600" width="5.600" height="5.600" fill="#7fba00"/><rect x="8.400" y="18.200" width="5.600" height="5.600" fill="#00a4ef"/><rect x="15" y="18.200" width="5.600" height="5.600" fill="#ffb900"/></svg>
<svg style="position:absolute;left:755.4px;top:861px;" width="28.6" height="27" viewBox="0 0 28.6 27"><rect x="13" y="3.600" width="15" height="19.800" rx="0.800" fill="#fff" stroke="#1e6f42" stroke-width="1.200"/><path d="M17.600 6.200h8M17.600 9.300h8M17.600 12.400h8M17.600 15.500h8M17.600 18.600h8M20.400 5v16M23.400 5v16" stroke="#2f8a58" stroke-width="0.900"/><path d="M0.200 3.200L16.400 0v27L0.200 23.800z" fill="#1e6f42"/><path d="M4.800 8.400h2.700l1.600 3.300l1.700-3.300h2.600l-2.900 5.100l3 5.100h-2.800l-1.700-3.400l-1.700 3.400h-2.700l3-5.100z" fill="#fff"/></svg>
<svg style="position:absolute;left:818px;top:861px;" width="28" height="27" viewBox="0 0 28 27"><rect x="13.600" y="5.200" width="14" height="15.600" fill="#fff" stroke="#0f6fc6" stroke-width="1.200"/><path d="M14 6l6.800 6.400L27.400 6" fill="none" stroke="#0f6fc6" stroke-width="1.400"/><path d="M0.200 3.200L16.400 0v27L0.200 23.800z" fill="#0f6fc6"/><ellipse cx="8.400" cy="13.500" rx="3.500" ry="4.400" fill="none" stroke="#fff" stroke-width="2.100"/></svg>
<svg style="position:absolute;left:880px;top:861px;" width="27.6" height="27" viewBox="0 0 27.6 27"><rect x="13" y="3.600" width="14" height="19.800" rx="0.600" fill="#fff" stroke="#2a5699" stroke-width="1.200"/><path d="M17.400 7h7.400M17.400 9.800h7.400M17.400 12.600h7.400M17.400 15.400h7.400M17.400 18.200h7.400M17.400 21h7.400" stroke="#2a5699" stroke-width="1.300"/><path d="M0.200 3.200L16.400 0v27L0.200 23.800z" fill="#2a5699"/><path d="M2.800 8.800h2.200l1.200 6.400l1.400-6.400h2.100l1.400 6.400l1.200-6.400h2.100l-2.200 9.600h-2.200l-1.400-6.200l-1.400 6.200h-2.200z" fill="#fff"/></svg>
<svg style="position:absolute;left:940.6px;top:859.6px;" width="30" height="29" viewBox="0 0 30 29"><path fill="#36b7ee" d="M3.600 16.200C4 9.600 8.800 5 15 5c6.600 0 10.800 4.800 10.800 11.600v2.200H10.400c0.400 2.800 2.600 4.400 5.800 4.400c2.600 0 4.400-0.700 5.800-2.400l3.200 1.600c-2 3.200-5.200 4.800-9.400 4.800c-7 0-12.200-4.400-12.200-11zM10.500 14.400h9.300c-0.200-3-1.900-4.800-4.500-4.800c-2.600 0-4.400 1.800-4.800 4.800z"/><path fill="none" stroke="#f3c21b" stroke-width="1.700" d="M27.400 6.400C29.200 2.600 26.800 0.800 22 2.600C15.400 5 6.600 13 3 19.800C0.200 25.200 1.800 28 7.200 25.600"/></svg>
<svg style="position:absolute;left:1003.4px;top:860.4px;" width="30" height="28" viewBox="0 0 30 28"><path d="M14.600 5.200c7.400 0 12.600 3.200 12.600 8.800c0 7-5.600 12.600-13.600 12.600c-1.800 0-2.600-1-2.200-2.400c0.400-1.600-0.400-2.600-2-2.600h-3.200C2.800 21.600 0.800 19.400 0.800 16.200C0.800 10 6.800 5.200 14.600 5.200z" fill="#b9cfe0" stroke="#6d8296" stroke-width="0.800"/><circle cx="6.400" cy="15" r="2.100" fill="#d93a2e"/><circle cx="10.600" cy="10.400" r="2.100" fill="#5fb446"/><circle cx="16.600" cy="8.600" r="2.100" fill="#f0a020"/><circle cx="12" cy="18.800" r="1.700" fill="#3a3a3a"/><path d="M26.800 2.400l2 1.400L17.600 25.800l-2.400 1.800l0.200-3z" fill="#c8823c"/><path d="M24.600 0l5.400 3.600l-1.400 2.600l-4.800-3.200z" fill="#e8c89a"/></svg>
<div style="left:1050px;top:850.4px;width:61px;height:49.6px;background:#40494a;"></div>
<div style="left:1106.2px;top:850.4px;width:4.8px;height:49.6px;background:#353e3f;"></div>
<div style="left:1050px;top:896.6px;width:61px;height:3.4px;background:#f6b3ca;"></div>
<svg style="position:absolute;left:1066.8px;top:860.9px;" width="26.2" height="26.2" viewBox="0 0 26.2 26.2"><rect x="0" y="0" width="26.200" height="26.200" rx="0.800" fill="#fff"/><circle cx="13" cy="13.200" r="10.700" fill="#1a1212"/><path d="M7.800 5.600h10.400l2.200 3.700h-5.000v11.500h-5v-11.500h-5z" fill="url(#rb2)"/><defs><linearGradient id="rb2" x1="0" y1="0" x2="0" y2="1"><stop offset="0" stop-color="#e8261c"/><stop offset="0.13" stop-color="#ec2a1c"/><stop offset="0.15" stop-color="#eea00c"/><stop offset="0.26" stop-color="#eea00c"/><stop offset="0.27" stop-color="#ece010"/><stop offset="0.36" stop-color="#ece010"/><stop offset="0.38" stop-color="#5aae2a"/><stop offset="0.5" stop-color="#3aa62c"/><stop offset="0.52" stop-color="#16a44e"/><stop offset="0.62" stop-color="#16a44e"/><stop offset="0.64" stop-color="#0c9cd0"/><stop offset="0.76" stop-color="#0c9cd0"/><stop offset="0.78" stop-color="#2a6cd0"/><stop offset="0.88" stop-color="#2a6cd0"/><stop offset="0.9" stop-color="#d81888"/><stop offset="1" stop-color="#d81888"/></linearGradient></defs></svg>
<svg style="position:absolute;left:1284.6px;top:864.6px;" width="19.2" height="19.8" viewBox="0 0 19.2 19.8"><circle cx="12.800" cy="4.600" r="3.600" fill="none" stroke="#fff" stroke-width="1.300"/><path d="M8.600 12.200a5.600 5.600 0 0 1 9.800 3" fill="none" stroke="#fff" stroke-width="1.300"/><circle cx="5.800" cy="10.400" r="3" fill="none" stroke="#fff" stroke-width="1.300"/><path d="M0.700 19.400a5.200 5.200 0 0 1 10.300 0" fill="none" stroke="#fff" stroke-width="1.300"/></svg>
<svg style="position:absolute;left:1330.6px;top:870.6px;" width="17.4" height="9.6" viewBox="0 0 17.4 9.6"><path d="M0.700 8.900L8.700 0.900L16.700 8.900" fill="none" stroke="#fff" stroke-width="1.300"/></svg>
<svg style="position:absolute;left:1359px;top:867.4px;" width="20.6" height="14" viewBox="0 0 20.6 14"><path d="M2.600 0.400v3M5.600 0.400v3" stroke="#fff" stroke-width="1.100"/><path d="M1 3.400h6.200v2.400a3.100 3.100 0 0 1-6.200 0zM4.100 8.800v2.600h2" fill="none" stroke="#fff" stroke-width="1.100"/><rect x="5.600" y="4.600" width="13" height="8.600" fill="#0d1819" stroke="#fff" stroke-width="1.200"/><rect x="7.600" y="6.600" width="9" height="4.600" fill="#fff"/><rect x="19.200" y="7" width="1.400" height="3.800" fill="#fff"/></svg>
<svg style="position:absolute;left:1388.4px;top:866.4px;" width="21.6" height="19" viewBox="0 0 21.6 19"><path d="M5 0.700h15.400v12.600M5 0.700v3.400M5 9.400v7.800h6" fill="none" stroke="#fff" stroke-width="1.200"/><rect x="2.800" y="3.800" width="4.600" height="5.800" fill="none" stroke="#fff" stroke-width="1.100"/><path d="M5 5.200v2" stroke="#fff" stroke-width="1"/><circle cx="15.200" cy="13.200" r="5.600" fill="#e81123"/><path d="M12.800 10.800l4.800 4.800M17.600 10.800l-4.800 4.800" stroke="#fff" stroke-width="1.500"/></svg>
<svg style="position:absolute;left:1418.4px;top:865.4px;" width="19" height="19" viewBox="0 0 19 19"><circle cx="9.500" cy="9.500" r="9.300" fill="#8c8c8c"/><path d="M5.400 5.400l8.200 8.200M13.600 5.400l-8.200 8.200" stroke="#0b0b0b" stroke-width="2.300"/></svg>
<div class="t" style="left:1440px;top:856.61px;font-size:14.4px;line-height:14.4px;color:#fff;white-space:pre;letter-spacing:-0.25px;width:96px;text-align:center;">14:23</div>
<div class="t" style="left:1440px;top:879.41px;font-size:14.4px;line-height:14.4px;color:#fff;white-space:pre;letter-spacing:0.28px;width:96px;text-align:center;">2018/04/26</div>
<svg style="position:absolute;left:1548.8px;top:865.4px;" width="20.6" height="18" viewBox="0 0 20.6 18"><path d="M0.400 0.400h20v13.400h-6.200v3.800l-3.800-3.800h-10z" fill="#fff"/><path d="M3.600 3.800h13.400M3.600 6.600h13.400M3.600 9.400h9" stroke="#0d1819" stroke-width="1.200"/></svg>
<svg style="position:absolute;left:1557.6px;top:874.4px;" width="21" height="21" viewBox="0 0 21 21"><circle cx="10.500" cy="10.500" r="9.400" fill="#161c1e" stroke="#6b6f70" stroke-width="1.500"/></svg>
<div class="t" style="left:1563.4px;top:877.75px;font-size:14px;line-height:14px;color:#fff;white-space:pre;font-weight:bold;">1</div>
<div style="left:1594.4px;top:852px;width:1px;height:48px;background:#5a6062;"></div>
</body>
</html>
